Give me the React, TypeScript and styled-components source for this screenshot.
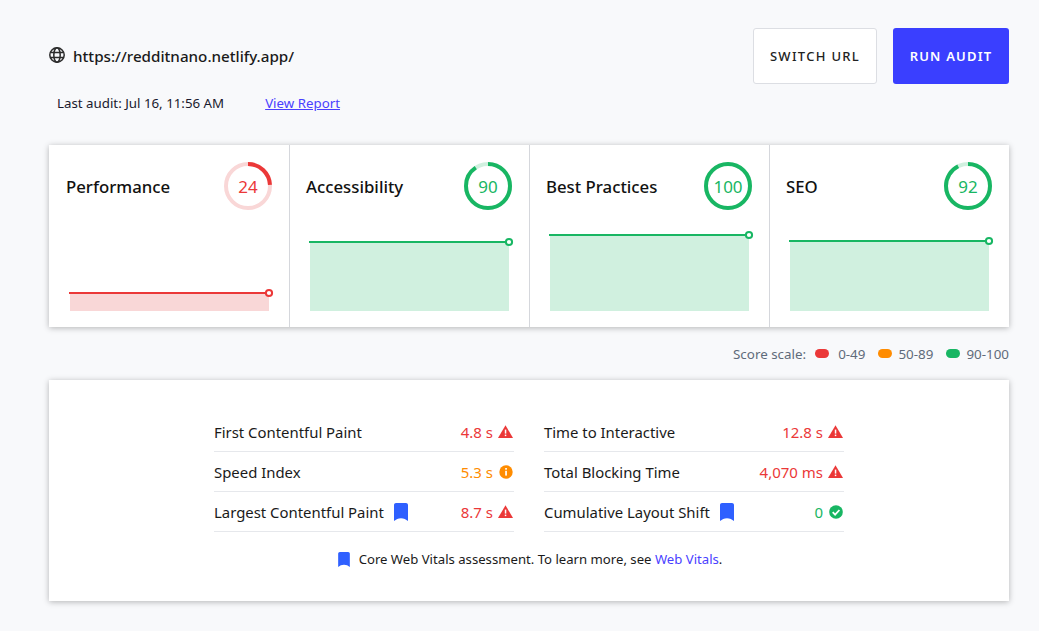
import styled, { createGlobalStyle } from "styled-components";

const RED = "#eb3838";
const ORANGE = "#ff8c00";
const GREEN = "#18b663";
const BLUE = "#2f60ff";

type Tone = "red" | "orange" | "green";
const toneColor: Record<Tone, string> = { red: RED, orange: ORANGE, green: GREEN };
const toneTint: Record<Tone, string> = { red: "#f9d7d7", orange: "#ffe8cc", green: "#d0f0df" };

const categories: { title: string; score: number; lineY: number; tone: Tone }[] = [
  { title: "Performance", score: 24, lineY: 66, tone: "red" },
  { title: "Accessibility", score: 90, lineY: 15, tone: "green" },
  { title: "Best Practices", score: 100, lineY: 8, tone: "green" },
  { title: "SEO", score: 92, lineY: 14, tone: "green" },
];

type Metric = { label: string; value: string; tone: Tone; vital?: boolean };

const leftMetrics: Metric[] = [
  { label: "First Contentful Paint", value: "4.8 s", tone: "red" },
  { label: "Speed Index", value: "5.3 s", tone: "orange" },
  { label: "Largest Contentful Paint", value: "8.7 s", tone: "red", vital: true },
];

const rightMetrics: Metric[] = [
  { label: "Time to Interactive", value: "12.8 s", tone: "red" },
  { label: "Total Blocking Time", value: "4,070 ms", tone: "red" },
  { label: "Cumulative Layout Shift", value: "0", tone: "green", vital: true },
];

const GlobeIcon = () => (
  <GlobeSvg width="16" height="16" viewBox="0 0 16 16" fill="none" stroke="#2b2b2b" strokeWidth="1.5">
    <circle cx="8" cy="8" r="7.2" />
    <ellipse cx="8" cy="8" rx="3.2" ry="7.2" />
    <path d="M1.4 5.4h13.2M1.4 10.6h13.2" />
  </GlobeSvg>
);

const BookmarkIcon = ({ width, height }: { width: number; height: number }) => (
  <svg width={width} height={height} viewBox="0 0 14 18">
    <path d="M0 2C0 0.9 0.9 0 2 0h10c1.1 0 2 0.9 2 2v16l-3.2-2c-2.2-1.1-5.400-1.1-7.600 0L0 18z" fill={BLUE} />
  </svg>
);

const StatusIcon = ({ tone }: { tone: Tone }) => {
  if (tone === "red") {
    return (
      <svg width="15" height="13" viewBox="0 0 15 13">
        <path d="M7.5 0.3L15 13H0z" fill={RED} />
        <rect x="6.8" y="4.6" width="1.5" height="4" fill="#fff" />
        <rect x="6.8" y="9.6" width="1.5" height="1.5" fill="#fff" />
      </svg>
    );
  }
  if (tone === "orange") {
    return (
      <svg width="14" height="14" viewBox="0 0 14 14">
        <circle cx="7" cy="7" r="6.7" fill={ORANGE} />
        <rect x="6.2" y="3" width="1.7" height="1.7" fill="#fff" />
        <rect x="6.2" y="5.8" width="1.7" height="4.8" fill="#fff" />
      </svg>
    );
  }
  return (
    <svg width="14" height="14" viewBox="0 0 14 14">
      <circle cx="7" cy="7" r="6.8" fill={GREEN} />
      <path d="M3.7 7.2l2.4 2.4 4.3-4.6" fill="none" stroke="#fff" strokeWidth="1.8" />
    </svg>
  );
};

const Gauge = ({ score, tone }: { score: number; tone: Tone }) => {
  const r = 22;
  const length = 2 * Math.PI * r;
  return (
    <GaugeWrap>
      <GaugeRing width="48" height="48" viewBox="0 0 48 48" fill="none" strokeWidth="4">
        <circle cx="24" cy="24" r={r} stroke={toneTint[tone]} />
        <circle
          cx="24"
          cy="24"
          r={r}
          stroke={toneColor[tone]}
          strokeDasharray={`${(length * score) / 100} ${length}`}
          transform="rotate(-90 24 24)"
        />
      </GaugeRing>
      <GaugeValue $tone={tone}>{score}</GaugeValue>
    </GaugeWrap>
  );
};

const TrendChart = ({ lineY, tone }: { lineY: number; tone: Tone }) => (
  <Chart width="206" height="84" viewBox="0 0 206 84" fill="none">
    <rect x="4" y={lineY} width="199" height={84 - lineY} fill={toneTint[tone]} />
    <path d={`M3 ${lineY}H203`} stroke={toneColor[tone]} strokeWidth="2" />
    <circle cx="203" cy={lineY} r="3.1" fill="#fff" stroke={toneColor[tone]} strokeWidth="2" />
  </Chart>
);

const MetricRow = ({ metric }: { metric: Metric }) => (
  <Row>
    <RowLabel>
      {metric.label}
      {metric.vital && <BookmarkIcon width={14} height={18} />}
    </RowLabel>
    <RowValue $tone={metric.tone}>
      {metric.value}
      <IconSlot>
        <StatusIcon tone={metric.tone} />
      </IconSlot>
    </RowValue>
  </Row>
);

export default function App() {
  return (
    <Page>
      <GlobalStyle />
      <Header>
        <SiteInfo>
          <UrlLine>
            <GlobeIcon />
            <Url>https://redditnano.netlify.app/</Url>
          </UrlLine>
          <AuditLine>
            <span>Last audit: Jul 16, 11:56 AM</span>
            <ReportLink href="#">View Report</ReportLink>
          </AuditLine>
        </SiteInfo>
        <Actions>
          <OutlineButton>SWITCH URL</OutlineButton>
          <PrimaryButton>RUN AUDIT</PrimaryButton>
        </Actions>
      </Header>

      <ScoreCard>
        {categories.map((c, i) => (
          <Category key={c.title} $first={i === 0}>
            <CategoryTop>
              <CategoryTitle>{c.title}</CategoryTitle>
              <Gauge score={c.score} tone={c.tone} />
            </CategoryTop>
            <TrendChart lineY={c.lineY} tone={c.tone} />
          </Category>
        ))}
      </ScoreCard>

      <Legend>
        <LegendLabel>Score scale:</LegendLabel>
        <LegendItem>
          <LegendPill $tone="red" />
          <LegendRange $wide>0-49</LegendRange>
        </LegendItem>
        <LegendItem>
          <LegendPill $tone="orange" />
          <LegendRange>50-89</LegendRange>
        </LegendItem>
        <LegendItem>
          <LegendPill $tone="green" />
          <LegendRange>90-100</LegendRange>
        </LegendItem>
      </Legend>

      <MetricsPanel>
        <MetricsGrid>
          <MetricsColumn>
            {leftMetrics.map((m) => (
              <MetricRow key={m.label} metric={m} />
            ))}
          </MetricsColumn>
          <MetricsColumn>
            {rightMetrics.map((m) => (
              <MetricRow key={m.label} metric={m} />
            ))}
          </MetricsColumn>
        </MetricsGrid>
        <Footnote>
          <BookmarkIcon width={12} height={15} />
          <span>
            Core Web Vitals assessment. To learn more, see <FootLink href="#">Web Vitals</FootLink>.
          </span>
        </Footnote>
      </MetricsPanel>
    </Page>
  );
}

const GlobalStyle = createGlobalStyle`
  * {
    box-sizing: border-box;
  }
  html,
  body {
    margin: 0;
    padding: 0;
    background: #f8f9fb;
  }
  body {
    font-family: "Noto Sans", "Open Sans", sans-serif;
    color: #111;
  }
`;

const Page = styled.div`
  display: flex;
  flex-flow: column nowrap;
  width: 1039px;
  height: 631px;
  overflow: hidden;
  padding: 28px 30px 0 49px;
`;

const Header = styled.div`
  display: flex;
  justify-content: space-between;
  align-items: flex-start;
  height: 117px;
`;

const SiteInfo = styled.div`
  display: flex;
  flex-flow: column;
`;

const UrlLine = styled.div`
  display: flex;
  align-items: center;
  gap: 8px;
  height: 56px;
`;

const GlobeSvg = styled.svg`
  margin-bottom: 2px;
`;

const Url = styled.span`
  font-size: 15.2px;
  font-weight: 500;
  color: #1a1a1a;
`;

const AuditLine = styled.div`
  display: flex;
  gap: 41px;
  margin-top: 10px;
  padding-left: 8px;
  font-size: 13.3px;
  line-height: 18px;
  color: #1a1a2e;
`;

const ReportLink = styled.a`
  color: #4a3fff;
  text-decoration: underline;
`;

const Actions = styled.div`
  display: flex;
  gap: 16px;
`;

const OutlineButton = styled.button`
  width: 124px;
  height: 56px;
  padding: 0;
  background: #fff;
  border: 1px solid #dcdee3;
  border-radius: 3px;
  font-family: inherit;
  font-size: 13px;
  font-weight: 500;
  letter-spacing: 1.3px;
  color: #222;
`;

const PrimaryButton = styled.button`
  width: 116px;
  height: 56px;
  padding: 0;
  background: #3a3fff;
  border: 0;
  border-radius: 3px;
  font-family: inherit;
  font-size: 13px;
  font-weight: 600;
  letter-spacing: 1.2px;
  color: #fff;
`;

const ScoreCard = styled.div`
  display: grid;
  grid-template-columns: repeat(4, 240px);
  height: 182px;
  background: #fff;
  box-shadow: 0 1px 6px rgba(0, 0, 0, 0.28);
`;

const Category = styled.div<{ $first: boolean }>`
  display: flex;
  flex-flow: column;
  justify-content: space-between;
  padding: 17px 17px 16px 16px;
  border-left: 1px solid ${(p) => (p.$first ? "transparent" : "#d5d7dc")};
`;

const CategoryTop = styled.div`
  display: flex;
  justify-content: space-between;
  align-items: center;
`;

const CategoryTitle = styled.div`
  font-size: 16.8px;
  font-weight: 500;
  color: #111;
`;

const GaugeWrap = styled.div`
  display: grid;
  place-items: center;
  width: 48px;
  height: 48px;
`;

const GaugeRing = styled.svg`
  grid-area: 1 / 1;
`;

const GaugeValue = styled.span<{ $tone: Tone }>`
  grid-area: 1 / 1;
  font-size: 17px;
  color: ${(p) => toneColor[p.$tone]};
`;

const Chart = styled.svg`
  display: block;
  overflow: visible;
`;

const Legend = styled.div`
  display: flex;
  justify-content: flex-end;
  align-items: center;
  gap: 13px;
  height: 53px;
  font-size: 13.4px;
  color: #5f6b7a;
`;

const LegendLabel = styled.span`
  margin-right: -4px;
`;

const LegendItem = styled.div`
  display: flex;
  align-items: center;
  gap: 6px;
`;

const LegendPill = styled.i<{ $tone: Tone }>`
  width: 14px;
  height: 9px;
  border-radius: 4.5px;
  background: ${(p) => toneColor[p.$tone]};
`;

const LegendRange = styled.span<{ $wide?: boolean }>`
  margin-left: ${(p) => (p.$wide ? "3px" : "0")};
`;

const MetricsPanel = styled.div`
  display: flex;
  flex-flow: column;
  align-items: center;
  height: 221px;
  padding-top: 32px;
  background: #fff;
  box-shadow: 0 1px 6px rgba(0, 0, 0, 0.28);
`;

const MetricsGrid = styled.div`
  display: grid;
  grid-template-columns: 300px 300px;
  column-gap: 30px;
`;

const MetricsColumn = styled.div`
  display: flex;
  flex-flow: column;
`;

const Row = styled.div`
  display: flex;
  justify-content: space-between;
  align-items: center;
  height: 40px;
  border-bottom: 1px solid #e6e8ec;
`;

const RowLabel = styled.div`
  display: flex;
  align-items: center;
  gap: 10px;
  font-size: 14.9px;
  color: #1a1a1a;
`;

const RowValue = styled.div<{ $tone: Tone }>`
  display: flex;
  align-items: center;
  gap: 5px;
  font-size: 15px;
  color: ${(p) => toneColor[p.$tone]};
`;

const IconSlot = styled.span`
  display: flex;
  justify-content: center;
  width: 15px;
  margin-right: 1px;
`;

const Footnote = styled.div`
  display: flex;
  align-items: center;
  gap: 9px;
  margin-top: 18px;
  padding-left: 2px;
  font-size: 13.15px;
  color: #1a1a1a;
`;

const FootLink = styled.a`
  color: #4a3fff;
  text-decoration: none;
`;
